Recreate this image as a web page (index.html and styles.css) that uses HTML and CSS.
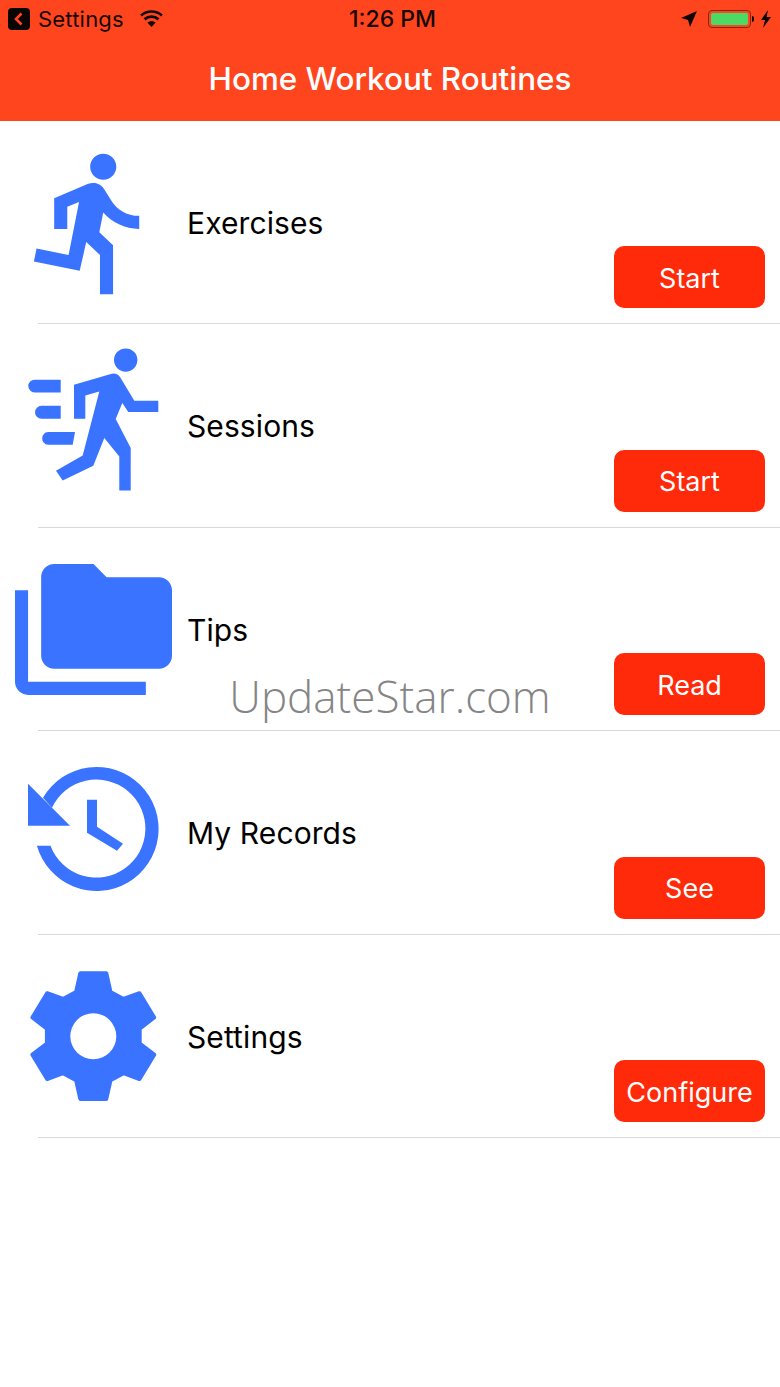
FILE: index.html
```html
<!DOCTYPE html>
<html lang="en">
<head>
<meta charset="utf-8">
<title>Home Workout Routines</title>
<link rel="stylesheet" href="styles.css">
</head>
<body>
<div class="app">
  <header class="nav">
    <div class="status">
      <div class="status-left">
        <svg class="back-badge" viewBox="0 0 22 22"><rect width="22" height="22" rx="4" fill="#0a0503"/><path d="M13.5 5.5 8 11l5.5 5.5" fill="none" stroke="#ff4620" stroke-width="2.6"/></svg>
        <span class="carrier">Settings</span>
        <svg class="wifi" viewBox="0 0 24 18"><path d="M12 18 7.6 13.2a6.6 6.6 0 0 1 8.8 0zM5.6 11 3.6 8.8a12.6 12.6 0 0 1 16.8 0L18.4 11a9.6 9.6 0 0 0-12.8 0zM1.8 6.8 0 4.8a18 18 0 0 1 24 0l-1.8 2a15.3 15.3 0 0 0-20.4 0z" fill="#120603"/></svg>
      </div>
      <span class="clock">1:26 PM</span>
      <div class="status-right">
        <svg class="location" viewBox="0 0 16 16"><path d="M16 0 0 7l7 2 2 7z" fill="#120603"/></svg>
        <span class="battery"><span class="battery-fill"></span></span>
        <span class="battery-nub"></span>
        <svg class="bolt" viewBox="0 0 10 18"><path d="M7 0 0 10h4l-2 8 8-11H5.6z" fill="#120603"/></svg>
      </div>
    </div>
    <h1 class="title">Home Workout Routines</h1>
  </header>

  <main class="menu">
    <section class="row">
      <svg class="icon" viewBox="0 0 24 24"><path d="M13.49 5.48c1.1 0 2-.9 2-2s-.9-2-2-2-2 .9-2 2 .9 2 2 2zm-3.6 13.9l1-4.4 2.1 2v6h2v-7.5l-2.1-2 .6-3c1.3 1.5 3.3 2.5 5.5 2.5v-2c-1.9 0-3.5-1-4.3-2.4l-1-1.6c-.4-.6-1-1-1.7-1-.3 0-.5.1-.8.1l-5.2 2.2v4.7h2v-3.4l1.8-.7-1.6 8.1-4.9-1-.4 2 7 1.4z"/></svg>
      <span class="label">Exercises</span>
      <button class="action">Start</button>
    </section>

    <section class="row">
      <svg class="icon" viewBox="0 0 157 157">
        <circle cx="110.7" cy="13.1" r="11.7"/>
        <path d="M59 37.75 96.7 26.75Q102 25.5 105 30L119.3 53.75H143.3V65.1H113.3L107.3 56.1 100.7 72.1 115.7 101.1V143.4H104.3V109.4L89.3 91.1 78.3 118.75 47.7 133.4 41 123.75 67.7 108.4 84.3 44.4 70.3 48.4V71.75H59z"/>
        <path d="M19.6 32.75H45.7V45.4H19.6a6.3 6.3 0 0 1 0-12.65zM26.5 58.75H45.7V71.75H26.5a6.5 6.5 0 0 1 0-13zM33 85H60L57.7 97.75H33a6.4 6.4 0 0 1 0-12.75z"/>
      </svg>
      <span class="label">Sessions</span>
      <button class="action">Start</button>
    </section>

    <section class="row">
      <svg class="icon" viewBox="0 0 24 24"><path d="M2 6H0v14c0 1.1.9 2 2 2h18v-2H2V6zM22 4h-8l-2-2H6c-1.1 0-2 .9-2 2v12c0 1.1.9 2 2 2h16c1.1 0 2-.9 2-2V6c0-1.1-.9-2-2-2z"/></svg>
      <span class="label">Tips</span>
      <button class="action">Read</button>
    </section>

    <section class="row">
      <svg class="icon" viewBox="0 0 157 157">
        <path d="M21.9 91.75A62 62 0 1 0 28 43.75L37 53.75A49 49 0 1 1 35.5 91.75z"/>
        <path d="M13 29.75 55 71.75H13z"/>
        <path d="M72 45.75H82V72.75L108 89.75 102 96.75 72 78.75z"/>
      </svg>
      <span class="label">My Records</span>
      <button class="action">See</button>
    </section>

    <section class="row">
      <svg class="icon" viewBox="0 0 157 157">
        <path class="gear" d="M65.3 15.3H91.3L95.5 34 108.5 41 124.5 35.2 139.2 59.5 124.7 70.6V85.6L139.2 96.7 124.5 121 108.5 115.2 95.5 122.2 91.3 140.9H65.3L61.1 122.2 48.1 115.2 32.1 121 17.4 96.7 31.9 85.6V70.6L17.4 59.5 32.1 35.2 48.1 41 61.1 34z"/>
        <circle class="gear-hole" cx="78.3" cy="78.2" r="23"/>
      </svg>
      <span class="label">Settings</span>
      <button class="action">Configure</button>
    </section>
  </main>

  <div class="watermark">UpdateStar.com</div>
</div>
</body>
</html>
```

FILE: styles.css
```css
* {
  box-sizing: border-box;
}

html,
body {
  margin: 0;
  background: #fff;
}

.app {
  position: relative;
  width: 780px;
  height: 1387px;
  overflow: hidden;
  font-family: "Inter", "Liberation Sans", sans-serif;
}

/* Navigation bar with the phone status strip on top */
.nav {
  height: 120.5px;
  background: #ff451e;
  display: flex;
  flex-direction: column;
}

.status {
  height: 38px;
  display: grid;
  grid-template-columns: 1fr auto 1fr;
  align-items: center;
  padding: 0 9px 0 8px;
  color: #170703;
}

.status-left,
.status-right {
  display: flex;
  align-items: center;
}

.status-right {
  justify-content: flex-end;
}

.back-badge {
  width: 22px;
  height: 22px;
}

.carrier {
  margin-left: 8px;
  font-size: 22px;
  letter-spacing: 0.2px;
}

.wifi {
  width: 23px;
  height: 17px;
  margin-left: 16px;
  margin-top: -1px;
}

.clock {
  font-size: 23px;
  font-weight: 500;
  margin-left: 6px;
}

.location {
  width: 16px;
  height: 16px;
  margin-right: 11px;
}

.battery {
  width: 43px;
  height: 18px;
  padding: 2px;
  border: 1px solid #7a2a12;
  border-radius: 4px;
  display: flex;
}

.battery-fill {
  flex: 1;
  background: #4cd964;
  border-radius: 2px;
}

.battery-nub {
  width: 2px;
  height: 6px;
  margin-left: 1px;
  background: #170703;
  border-radius: 0 2px 2px 0;
}

.bolt {
  width: 10px;
  height: 18px;
  margin-left: 7px;
}

.title {
  margin: 0;
  padding-top: 6px;
  text-align: center;
  color: #fff;
  font-size: 31.4px;
  font-weight: 500;
  line-height: 70px;
}

/* Menu rows */
.row {
  position: relative;
  height: 203.5px;
  display: flex;
  align-items: center;
}

.row::after {
  content: "";
  position: absolute;
  left: 38px;
  right: 0;
  bottom: 0;
  height: 1px;
  background: #d9d9d9;
}

.icon {
  flex: none;
  width: 157px;
  height: 157px;
  margin-left: 15px;
  fill: #3973ff;
}

.gear {
  stroke: #3973ff;
  stroke-width: 4;
  stroke-linejoin: round;
}

.gear-hole {
  fill: #fff;
}

.label {
  flex: 1;
  margin: 1px 0 0 15px;
  color: #000;
  font-size: 30px;
  letter-spacing: 0.1px;
}

.action {
  flex: none;
  align-self: flex-end;
  width: 151px;
  height: 62px;
  margin: 0 15px 16px 0;
  padding: 2px 0 0;
  border: 0;
  border-radius: 10px;
  background: #ff2a0a;
  color: #fff;
  font-family: inherit;
  font-size: 27px;
}

/* Site stamp laid over the list */
.watermark {
  position: absolute;
  left: 0;
  right: 0;
  top: 667px;
  text-align: center;
  color: #858585;
  font-family: "Open Sans", sans-serif;
  font-size: 44px;
  font-weight: 300;
  line-height: 58px;
}
```
